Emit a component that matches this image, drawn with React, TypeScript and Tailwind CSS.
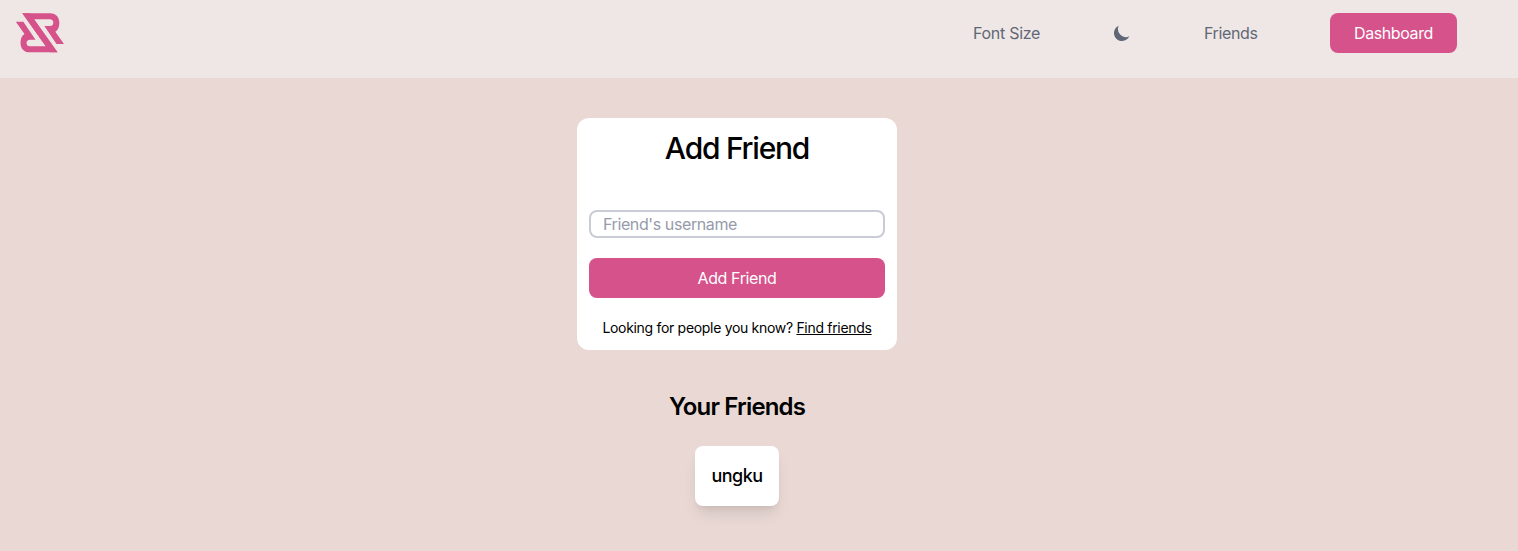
import { HiMoon } from "react-icons/hi";

function Logo() {
  const half =
    "M67 40H150C169 40 178 53 178 69C178 80 174 91 166 95L192 132H169.5L133 78H150C156 78 160 74 160 68C160 62 156 58 150 58H102L172.5 157H150L67 40Z";
  return (
    <svg viewBox="48 39 144 120" className="h-10 w-12 overflow-visible" fill="#d6528a" aria-hidden="true">
      <path d={half} />
      <path d={half} transform="rotate(180 119.75 98.5)" />
    </svg>
  );
}

function Navbar() {
  return (
    <nav className="flex h-[78px] items-start justify-between bg-[#efe7e5] pl-4 pr-[61px] pt-[13px]">
      <a href="#"><Logo /></a>
      <div className="flex h-10 items-center text-[#5f6777]">
        <button className="mr-[72px] w-[67px] whitespace-nowrap tracking-[-0.28px]">Font Size</button>
        <button className="mr-[72px]" aria-label="Toggle theme"><HiMoon className="size-5" /></button>
        <a href="#" className="mr-[72px] w-[54px] tracking-[-0.36px]">Friends</a>
        <a href="#" className="flex h-10 w-[127px] items-center justify-center rounded-lg bg-[#d6528a] tracking-[-0.4px] text-white">Dashboard</a>
      </div>
    </nav>
  );
}

export default function App() {
  return (
    <div className="min-h-screen bg-[#e9d8d4] font-['Inter',sans-serif] text-black">
      <Navbar />
      <main className="flex flex-col items-center pr-11 pt-10">
        <section className="flex h-[232px] w-80 flex-col rounded-xl bg-white px-3 pt-3">
          <h1 className="text-center text-[30px] font-medium leading-9 tracking-[-1.25px]">Add Friend</h1>
          <input
            className="mt-11 h-7 w-full rounded-lg border-2 border-[#c9cbd5] px-3 tracking-[-0.4px] placeholder:text-[#969baa]"
            placeholder="Friend's username"
          />
          <button className="mt-5 h-10 w-full rounded-lg bg-[#d6528a] tracking-[-0.4px] text-white">Add Friend</button>
          <p className="mt-5 whitespace-nowrap text-center text-sm tracking-[-0.31px]">
            Looking for people you know? <a href="#" className="underline">Find friends</a>
          </p>
        </section>
        <h2 className="mt-[41px] text-2xl font-semibold tracking-[-0.85px]">Your Friends</h2>
        <div className="mt-[23px] flex h-[60px] w-[84px] items-center justify-center rounded-lg bg-white text-lg font-medium tracking-[-0.5px] shadow-lg">
          ungku
        </div>
      </main>
    </div>
  );
}
